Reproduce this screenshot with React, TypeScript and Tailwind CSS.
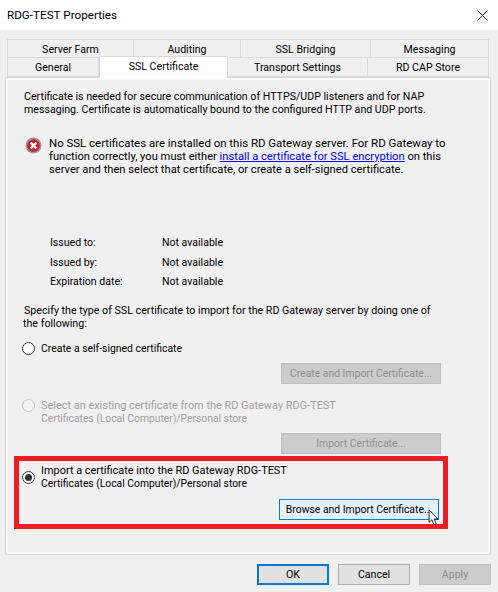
import React from 'react';

const font = { fontFamily: 'Roboto, "Noto Sans", sans-serif' };

function Tab({ label, className }: { label: string; className: string }) {
  return (
    <div className={`flex items-center justify-center border border-[#d9d9d9] bg-[#f0f0f0] text-black ${className}`}>
      {label}
    </div>
  );
}

function Radio({ checked, disabled }: { checked?: boolean; disabled?: boolean }) {
  return (
    <span
      className={`flex h-[13px] w-[13px] shrink-0 items-center justify-center rounded-full border ${
        disabled ? 'border-[#c4c4c4] bg-[#f4f4f4]' : 'border-[#333333] bg-white'
      }`}
    >
      {checked && <span className="h-[7px] w-[7px] rounded-full bg-[#333333]" />}
    </span>
  );
}

function DialogButton({ label, className }: { label: string; className: string }) {
  return <div className={`flex h-[21px] items-center justify-center whitespace-nowrap border ${className}`}>{label}</div>;
}

function ErrorIcon() {
  return (
    <svg width="17" height="17" viewBox="0 0 17 17" className="ml-[1px] shrink-0">
      <circle cx="8.5" cy="8.5" r="8" fill="#9a9a9a" />
      <circle cx="8.5" cy="8.5" r="6.3" fill="#c8202c" />
      <path d="M5.6 5.6l5.8 5.8M11.4 5.6l-5.8 5.8" stroke="#fff" strokeWidth="2.2" />
    </svg>
  );
}

function Cursor() {
  return (
    <svg width="12" height="17" viewBox="0 0 13 19" className="absolute left-[428px] top-[509px]">
      <path d="M1 1v14l3.2-3 2.3 5.5 2.4-1-2.3-5.3H11z" fill="#fff" stroke="#111" strokeWidth="1" />
    </svg>
  );
}

export default function App() {
  return (
    <div className="relative flex h-[592px] w-[498px] flex-col overflow-hidden bg-[#f0f0f0] text-[10.6px] leading-[13px] text-black" style={font}>
      <div className="flex h-[30px] items-center justify-between bg-white pl-[7px] pr-[10px]">
        <span className="text-[11.7px]">RDG-TEST Properties</span>
        <svg width="11" height="11" viewBox="0 0 11 11">
          <path d="M0.5 0.5l10 10M10.5 0.5l-10 10" stroke="#222" strokeWidth="1" />
        </svg>
      </div>

      <div className="mt-[9px] flex h-[19px] pl-[7px]">
        <Tab label="Server Farm" className="w-[127px] pt-[1px]" />
        <Tab label="Auditing" className="ml-[-1px] w-[108px] pt-[1px]" />
        <Tab label="SSL Bridging" className="ml-[-1px] w-[131px] pt-[1px]" />
        <Tab label="Messaging" className="ml-[-1px] w-[119px] pt-[1px]" />
      </div>
      <div className="flex h-[19px] pl-[7px]">
        <Tab label="General" className="w-[92px] border-t-0" />
        <div className="z-10 mt-[-2px] flex h-[22px] w-[129px] items-start justify-center border border-b-0 border-[#d9d9d9] bg-white pt-[3px]">
          SSL Certificate
        </div>
        <Tab label="Transport Settings" className="w-[140px] border-t-0 border-l-0" />
        <Tab label="RD CAP Store" className="w-[121px] border-t-0 border-l-0" />
      </div>

      <div className="ml-[5px] h-[478px] w-[486px] whitespace-nowrap border border-[#d9d9d9] bg-[#f0f0f0] pl-[18px] pr-[13px] pt-[12px] shadow-[inset_0_0_0_2px_#fafafa]">
        <p className="text-[10.63px]">
          Certificate is needed for secure communication of HTTPS/UDP listeners and for NAP
          <br />
          messaging. Certificate is automatically bound to the configured HTTP and UDP ports.
        </p>

        <div className="mt-[21px] flex gap-[7px]">
          <ErrorIcon />
          <div className="text-[11.17px]">
            <p className="text-[11.45px]">No SSL certificates are installed on this RD Gateway server. For RD Gateway to</p>
            <p>
              function correctly, you must either{' '}
              <span className="text-[#0000ff] underline">install a certificate for SSL encryption</span> on this
            </p>
            <p>server and then select that certificate, or create a self-signed certificate.</p>
          </div>
        </div>

        <div className="mt-[60px] grid grid-cols-[112px_1fr] gap-y-[6.5px] pl-[26px] text-[10.55px]">
          <span>Issued to:</span>
          <span>Not available</span>
          <span>Issued by:</span>
          <span>Not available</span>
          <span>Expiration date:</span>
          <span>Not available</span>
        </div>

        <p className="mt-[16px] text-[10.68px]">
          Specify the type of SSL certificate to import for the RD Gateway server by doing one of
          <br />
          <span className="ml-[-1px]">the following:</span>
        </p>

        <div className="ml-[-2px] mt-[12px] flex items-center gap-[6px] text-[10.41px]">
          <Radio />
          <span>Create a self-signed certificate</span>
        </div>
        <div className="mt-[8px] flex justify-end pr-[36px] text-[10.4px]">
          <DialogButton label="Create and Import Certificate..." className="w-[160px] border-[#bfbfbf] bg-[#cccccc] text-[#8f8f8f]" />
        </div>

        <div className="ml-[-2px] mt-[15px] flex gap-[6px] text-[#a0a0a0]">
          <Radio disabled />
          <div className="text-[10.32px]">
            <p className="text-[10.93px]">Select an existing certificate from the RD Gateway RDG-TEST</p>
            <p>Certificates (Local Computer)/Personal store</p>
          </div>
        </div>
        <div className="mt-[8px] flex justify-end pr-[36px] text-[10.4px]">
          <DialogButton label="Import Certificate..." className="w-[160px] border-[#bfbfbf] bg-[#cccccc] text-[#8f8f8f]" />
        </div>

        <div className="ml-[-2px] mt-[10px] flex items-center gap-[6px]">
          <Radio checked />
          <div className="text-[10.32px]">
            <p className="text-[10.93px]">Import a certificate into the RD Gateway RDG-TEST</p>
            <p>Certificates (Local Computer)/Personal store</p>
          </div>
        </div>
        <div className="mt-[9px] flex justify-end pr-[38px] text-[10.4px]">
          <DialogButton label="Browse and Import Certificate..." className="w-[160px] border-[#0078d7] bg-[#e5f1fb]" />
        </div>
      </div>

      <div className="mt-[9px] flex justify-end gap-[9px] pr-[7px]">
        <DialogButton label="OK" className="w-[72px] border-2 border-[#0078d7] bg-[#e1e1e1]" />
        <DialogButton label="Cancel" className="w-[72px] border-[#adadad] bg-[#e1e1e1]" />
        <DialogButton label="Apply" className="w-[72px] border-[#bfbfbf] bg-[#cccccc] text-[#8f8f8f]" />
      </div>

      {/* red annotation drawn over the screenshot */}
      <div className="pointer-events-none absolute left-[14px] top-[456px] h-[73px] w-[434px] border-[5px] border-[#ed1c24]" />
      <Cursor />
    </div>
  );
}
